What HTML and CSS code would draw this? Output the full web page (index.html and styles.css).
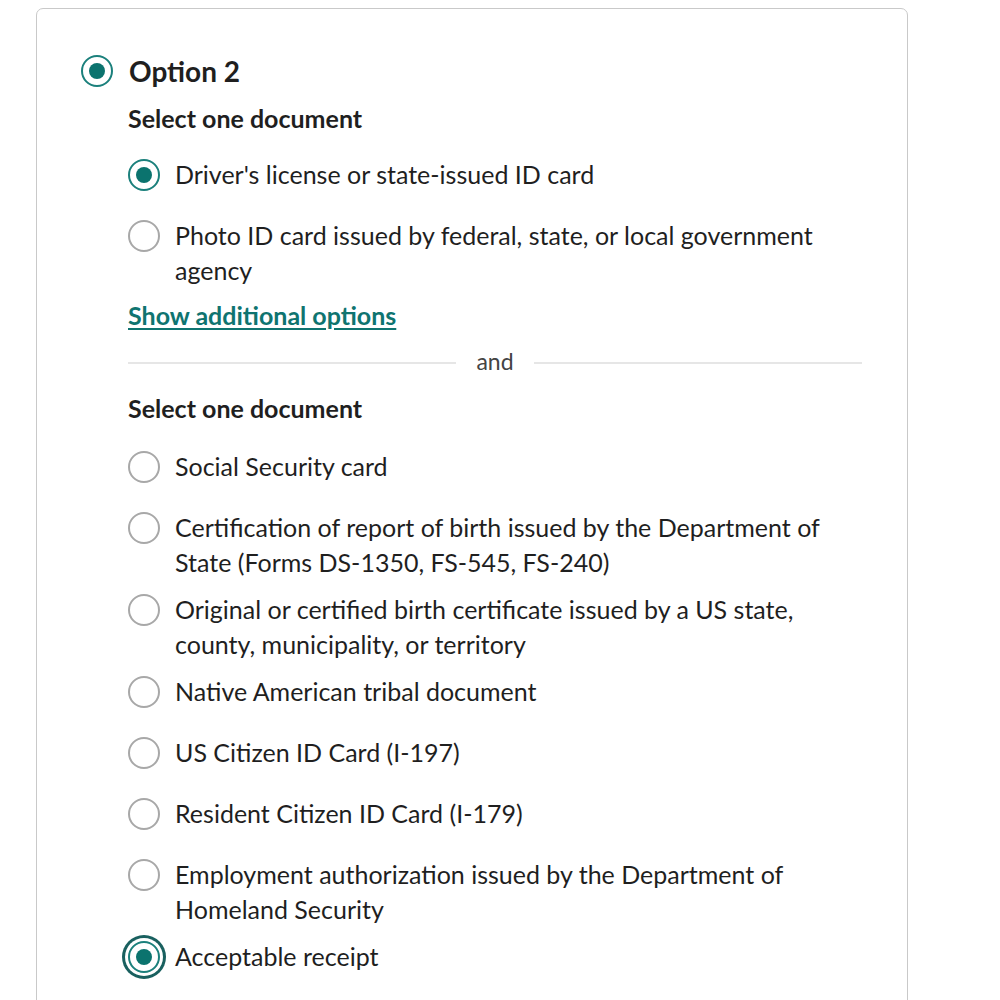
FILE: index.html
```html
<!DOCTYPE html>
<html lang="en">
<head>
<meta charset="utf-8">
<title>Option 2</title>
<link rel="stylesheet" href="styles.css">
</head>
<body>
<div class="card">
  <div class="option">
    <span class="radio radio-checked"></span>
    <span class="option-title">Option 2</span>
  </div>
  <div class="option-body">
    <h2 class="group-heading first">Select one document</h2>
    <ul class="choices">
      <li class="choice"><span class="radio radio-checked"></span><span class="choice-text">Driver's license or state-issued ID card</span></li>
      <li class="choice"><span class="radio"></span><span class="choice-text">Photo ID card issued by federal, state, or local government agency</span></li>
    </ul>
    <a class="show-more" href="#">Show additional options</a>
    <div class="divider"><span class="divider-line"></span><span class="divider-text">and</span><span class="divider-line"></span></div>
    <h2 class="group-heading second">Select one document</h2>
    <ul class="choices">
      <li class="choice"><span class="radio"></span><span class="choice-text">Social Security card</span></li>
      <li class="choice"><span class="radio"></span><span class="choice-text">Certification of report of birth issued by the Department of State (Forms DS-1350, FS-545, FS-240)</span></li>
      <li class="choice"><span class="radio"></span><span class="choice-text">Original or certified birth certificate issued by a US state, county, municipality, or territory</span></li>
      <li class="choice"><span class="radio"></span><span class="choice-text">Native American tribal document</span></li>
      <li class="choice"><span class="radio"></span><span class="choice-text">US Citizen ID Card (I-197)</span></li>
      <li class="choice"><span class="radio"></span><span class="choice-text">Resident Citizen ID Card (I-179)</span></li>
      <li class="choice"><span class="radio"></span><span class="choice-text">Employment authorization issued by the Department of Homeland Security</span></li>
      <li class="choice"><span class="radio radio-checked radio-focus"></span><span class="choice-text">Acceptable receipt</span></li>
    </ul>
  </div>
</div>
</body>
</html>
```
FILE: styles.css
```css
* { box-sizing: border-box; }
html, body { margin: 0; padding: 0; background: #fff; }
body {
  font-family: Lato, "Noto Sans", sans-serif;
  color: #1f1f1f;
}
.card {
  margin: 8px 0 0 36px;
  width: 872px;
  min-height: 1100px;
  border: 1px solid #c9c9c9;
  border-radius: 7px;
  padding: 45px 44px 40px 44px;
}
.option {
  display: flex;
  align-items: center;
  gap: 16px;
}
.option-title {
  font-size: 28px;
  font-weight: 700;
  line-height: 34px;
}
.radio {
  flex: none;
  width: 32px;
  height: 32px;
  border-radius: 50%;
  border: 2px solid #a8a8a8;
  display: flex;
  align-items: center;
  justify-content: center;
  background: #fff;
}
.radio-checked { border-color: #1b807c; }
.radio-checked::after {
  content: "";
  width: 16px;
  height: 16px;
  border-radius: 50%;
  background: #0b736e;
}
.radio-focus {
  box-shadow: 0 0 0 3px #fff, 0 0 0 6px #19605f;
}
.option-body {
  padding-left: 47px;
  width: 781px;
}
.group-heading {
  margin: 15px 0 21px 0;
  font-size: 25px;
  font-weight: 700;
  line-height: 30px;
}
.group-heading.second { margin-bottom: 23px; }
.choices {
  list-style: none;
  margin: 0;
  padding: 0;
  display: flex;
  flex-direction: column;
  gap: 6px;
}
.choice {
  display: flex;
  align-items: flex-start;
  gap: 15px;
  min-height: 55px;
}
.choice .radio { margin-top: 5px; }
.choice-text {
  font-size: 25px;
  line-height: 35px;
  padding: 3px 0;
}
.show-more {
  display: block;
  margin-top: 9px;
  font-size: 25px;
  font-weight: 700;
  line-height: 30px;
  color: #0f7470;
  text-decoration: underline;
  text-underline-offset: 3px;
}
.divider {
  margin-top: 18px;
  display: flex;
  align-items: center;
  height: 30px;
}
.divider-line {
  flex: 1;
  height: 2px;
  background: #e6e6e6;
}
.divider-text {
  padding: 0 20px 4px 20px;
  font-size: 23px;
  line-height: 26px;
  color: #444;
}
```
